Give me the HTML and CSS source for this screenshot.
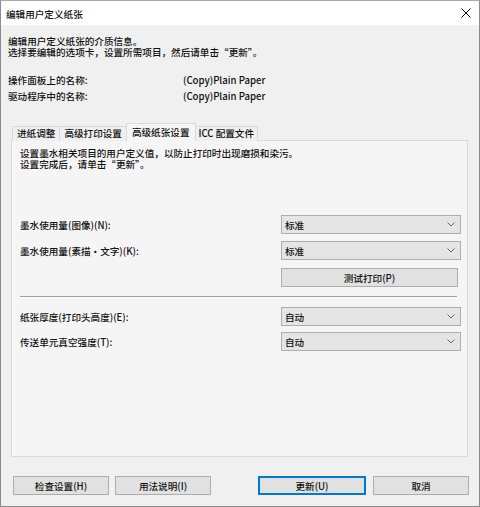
FILE: index.html
```html
<!DOCTYPE html>
<html lang="zh-CN">
<head>
<meta charset="utf-8">
<title>编辑用户定义纸张</title>
<link rel="stylesheet" href="styles.css">
</head>
<body>
<div class="window">
  <div class="titlebar">
    <span class="title">编辑用户定义纸张</span>
    <svg class="close" width="10" height="10" viewBox="0 0 10 10"><path d="M0.5 0.5 L9.5 9.5 M9.5 0.5 L0.5 9.5" stroke="#000" stroke-width="1" fill="none"/></svg>
  </div>
  <div class="content">
    <div class="intro">
      <div>编辑用户定义纸张的介质信息。</div>
      <div>选择要编辑的选项卡，设置所需项目，然后请单击“更新”。</div>
    </div>
    <div class="names">
      <div class="name-row"><span class="name-label">操作面板上的名称:</span><span class="name-value">(Copy)Plain Paper</span></div>
      <div class="name-row"><span class="name-label">驱动程序中的名称:</span><span class="name-value">(Copy)Plain Paper</span></div>
    </div>
    <div class="tabs-wrap">
      <div class="tabs">
        <div class="tab tab-first">进纸调整</div>
        <div class="tab">高级打印设置</div>
        <div class="tab tab-active">高级纸张设置</div>
        <div class="tab tab-last">ICC 配置文件</div>
      </div>
      <div class="panel">
        <div class="panel-text">
          <div>设置墨水相关项目的用户定义值，以防止打印时出现磨损和染污。</div>
          <div>设置完成后，请单击“更新”。</div>
        </div>
        <div class="row row-1">
          <span class="row-label">墨水使用量(图像)(N):</span>
          <div class="select"><span>标准</span><svg class="chev" width="8" height="5" viewBox="0 0 8 5"><path d="M0.5 0.5 L4 4 L7.5 0.5" stroke="#666" fill="none"/></svg></div>
        </div>
        <div class="row row-2">
          <span class="row-label">墨水使用量(素描·文字)(K):</span>
          <div class="select"><span>标准</span><svg class="chev" width="8" height="5" viewBox="0 0 8 5"><path d="M0.5 0.5 L4 4 L7.5 0.5" stroke="#666" fill="none"/></svg></div>
        </div>
        <div class="row row-btn">
          <div class="btn btn-test">测试打印(P)</div>
        </div>
        <div class="separator"></div>
        <div class="row row-3">
          <span class="row-label">纸张厚度(打印头高度)(E):</span>
          <div class="select"><span>自动</span><svg class="chev" width="8" height="5" viewBox="0 0 8 5"><path d="M0.5 0.5 L4 4 L7.5 0.5" stroke="#666" fill="none"/></svg></div>
        </div>
        <div class="row row-4">
          <span class="row-label">传送单元真空强度(T):</span>
          <div class="select"><span>自动</span><svg class="chev" width="8" height="5" viewBox="0 0 8 5"><path d="M0.5 0.5 L4 4 L7.5 0.5" stroke="#666" fill="none"/></svg></div>
        </div>
      </div>
    </div>
    <div class="footer">
      <div class="btn-group">
        <div class="btn btn-std">检查设置(H)</div>
        <div class="btn btn-std">用法说明(I)</div>
      </div>
      <div class="btn-group btn-group-right">
        <div class="btn btn-default">更新(U)</div>
        <div class="btn btn-std">取消</div>
      </div>
    </div>
  </div>
</div>
</body>
</html>
```

FILE: styles.css
```css
html, body {
  margin: 0;
  padding: 0;
}
body {
  width: 480px;
  height: 507px;
  overflow: hidden;
  font-family: "Noto Sans CJK SC", "Noto Sans", sans-serif;
  font-size: 9.6px;
  font-weight: 500;
  color: #111;
  background: #fff;
}
.window {
  box-sizing: border-box;
  width: 480px;
  height: 507px;
  border: 1px solid #8c8c8c;
  border-top-color: #a8a8a8;
  display: flex;
  flex-direction: column;
  background: #f0f0f0;
}
.titlebar {
  height: 24px;
  flex: none;
  background: #fff;
  display: flex;
  align-items: center;
  justify-content: space-between;
  padding: 0 8px 0 5px;
}
.title {
  line-height: 24px;
  padding-top: 1px;
}
.close {
  display: block;
}
.content {
  flex: 1;
  display: flex;
  flex-direction: column;
  padding: 0 11px 0 7px;
}
.intro {
  margin-top: 11px;
  line-height: 11px;
}
.names {
  margin-top: 14px;
}
.name-row {
  display: flex;
  line-height: 16px;
}
.name-label {
  width: 175px;
}
.tabs-wrap {
  margin-top: 20px;
  margin-left: 3px;
  display: flex;
  flex-direction: column;
}
.tabs {
  display: flex;
  align-items: flex-end;
  height: 17px;
  position: relative;
  z-index: 1;
  margin-bottom: -1px;
}
.tab {
  box-sizing: border-box;
  height: 15px;
  line-height: 13px;
  padding: 0 4px;
  border: 1px solid #d9d9d9;
  border-bottom: none;
  border-left: none;
  background: #f0f0f0;
  white-space: nowrap;
}
.tab-first {
  margin-left: 1px;
  border-left: 1px solid #d9d9d9;
}
.tab-active {
  height: 18px;
  line-height: 17px;
  padding: 0 5px;
  margin-left: -1px;
  border-left: 1px solid #d9d9d9;
  background: #f5f5f5;
}
.tab-last {
  padding: 0 3px;
}
.panel {
  box-sizing: border-box;
  height: 317px;
  border: 1px solid #d9d9d9;
  background: #f5f5f5;
  padding: 7px 6px 0 8px;
  display: flex;
  flex-direction: column;
}
.panel-text {
  line-height: 11px;
}
.row {
  display: flex;
  align-items: center;
  justify-content: space-between;
  height: 19px;
}
.row-1 { margin-top: 45px; }
.row-2 { margin-top: 7px; }
.row-btn { margin-top: 8px; justify-content: flex-end; padding-right: 3px; }
.row-3 { margin-top: 9px; }
.row-4 { margin-top: 6px; }
.select {
  box-sizing: border-box;
  width: 180px;
  height: 19px;
  border: 1px solid #adadad;
  background: #e5e5e5;
  display: flex;
  align-items: center;
  justify-content: space-between;
  padding: 0 5px 0 3px;
}
.chev {
  display: block;
}
.separator {
  margin-top: 9px;
  margin-right: 4px;
  border-top: 1px solid #a0a0a0;
  border-bottom: 1px solid #fff;
  height: 0;
}
.btn {
  box-sizing: border-box;
  height: 19px;
  border: 1px solid #adadad;
  background: #e1e1e1;
  display: flex;
  align-items: center;
  justify-content: center;
}
.btn-test {
  width: 177px;
}
.footer {
  margin-top: 19px;
  display: flex;
  justify-content: space-between;
  padding-left: 5px;
}
.btn-group {
  display: flex;
  gap: 6px;
}
.btn-group-right {
  gap: 7px;
  margin-right: -1px;
}
.btn-std {
  width: 96px;
}
.btn-default {
  width: 108px;
  border: 1px solid #0078d7;
  box-shadow: inset 0 0 0 1px #0078d7;
}
```
